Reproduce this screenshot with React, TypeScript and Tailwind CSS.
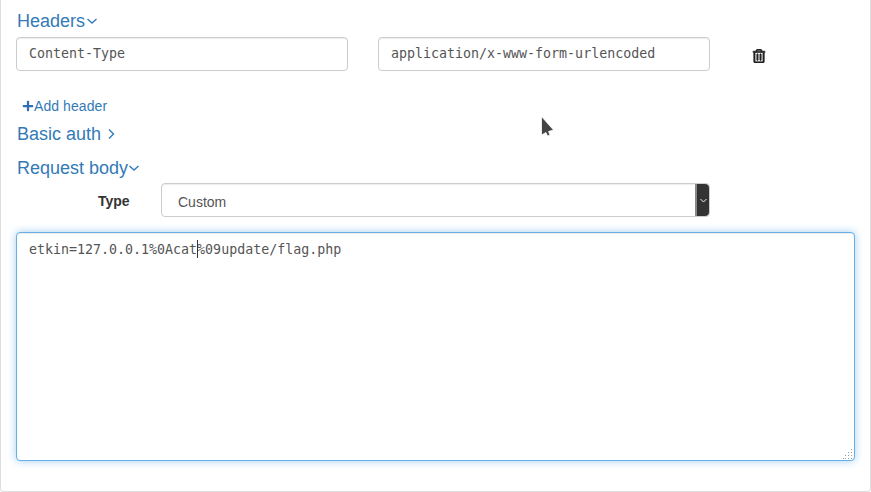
import { FaPlus, FaRegTrashAlt } from "react-icons/fa";

const sans = "font-['Liberation_Sans',Arial,sans-serif]";
const mono = "font-['DejaVu_Sans_Mono',monospace]";

function Chevron({ right = false }: { right?: boolean }) {
  return (
    <svg width="10" height="10" viewBox="0 0 10 10" fill="none" stroke="#337ab7" strokeWidth="1.4" className="shrink-0">
      {right ? <path d="M3 0.5 L7.5 5 L3 9.5" /> : <path d="M0.5 3 L5 7 L9.5 3" />}
    </svg>
  );
}

function HeaderInput({ value }: { value: string }) {
  return (
    <input
      readOnly
      value={value}
      className={`${mono} h-[34px] w-[332px] rounded border border-[#ccc] bg-white px-3 pb-[2px] text-[13.31px] text-[#555] shadow-[inset_0_1px_1px_rgba(0,0,0,0.075)] outline-none`}
    />
  );
}

export default function App() {
  return (
    <div className={`${sans} h-[492px] w-[871px] overflow-hidden bg-white`}>
      <div className="relative flex h-[492px] flex-col rounded-b border border-t-0 border-[#ddd] pl-[15px] pr-[15px]">
        <div className="mt-[11px] flex h-[20px] items-center gap-[2px] pl-[1px] text-[18px] leading-[20px] text-[#337ab7]">
          Headers
          <Chevron />
        </div>

        <div className="mt-[6px] flex items-center">
          <HeaderInput value="Content-Type" />
          <div className="ml-[30px]">
            <HeaderInput value="application/x-www-form-urlencoded" />
          </div>
          <FaRegTrashAlt size={14} stroke="currentColor" strokeWidth={24} className="ml-[42px] mt-[4px] text-[#222]" />
        </div>

        <div className="mt-[26px] flex h-[18px] items-center pl-[6px] text-[14px] leading-[18px] tracking-[0.08px] text-[#337ab7]">
          <FaPlus size={12} className="text-[#2f6fb0]" />
          Add header
        </div>

        <div className="mt-[9px] flex h-[20px] items-center gap-[5px] pl-[1px] text-[18px] leading-[20px] text-[#337ab7]">
          Basic auth
          <Chevron right />
        </div>

        <div className="mt-[14px] flex h-[20px] items-center gap-[1px] pl-[1px] text-[18px] leading-[20px] text-[#337ab7]">
          Request body
          <Chevron />
        </div>

        <div className="mt-[5px] flex items-center">
          <div className="w-[145px] pt-[2px] pl-[82px] text-[14px] font-bold text-[#333]">Type</div>
          <div className="flex h-[34px] w-[549px] items-center justify-between rounded border border-[#ccc] bg-white pl-4 text-[14px] text-[#555] shadow-[inset_0_1px_1px_rgba(0,0,0,0.075)]">
            <span className="mt-[5px]">Custom</span>
            <div className="flex h-[32px] w-[14px] items-center justify-center rounded-r-sm border-l-2 border-[#888] bg-[#333]">
              <svg width="7" height="5" viewBox="0 0 7 5" fill="none" stroke="#eee" strokeWidth="1">
                <path d="M0.5 1 L3.5 4 L6.5 1" />
              </svg>
            </div>
          </div>
        </div>

        <div className="relative mt-[15px] h-[229px] w-[839px]">
          <textarea
            readOnly
            value="etkin=127.0.0.1%0Acat%09update/flag.php"
            className={`${mono} block h-[229px] w-[839px] resize-none rounded border border-[#66afe9] bg-white px-3 py-[7px] text-[13.31px] leading-[20px] text-[#555] shadow-[inset_0_1px_1px_rgba(0,0,0,0.075),0_0_8px_rgba(102,175,233,0.6)] outline-none`}
          />
          <div className="absolute left-[181px] top-[8px] h-[18px] w-px bg-[#333]" />
          <svg width="11" height="11" viewBox="0 0 11 11" fill="#999" className="absolute bottom-[1px] right-[1px]">
            <rect x="8" y="0" width="1" height="1" />
            <rect x="5" y="3" width="1" height="1" />
            <rect x="8" y="3" width="1" height="1" />
            <rect x="2" y="6" width="1" height="1" />
            <rect x="5" y="6" width="1" height="1" />
            <rect x="8" y="6" width="1" height="1" />
            <rect x="0" y="9" width="1" height="1" />
            <rect x="2" y="9" width="1" height="1" />
            <rect x="5" y="9" width="1" height="1" />
            <rect x="8" y="9" width="1" height="1" />
          </svg>
        </div>

        <svg width="16" height="24" viewBox="0 0 16 24" className="absolute left-[537px] top-[113px]">
          <path d="M3.5 3.5 V22 L8 19.5 L9.5 23 L12 22 L10.5 18.5 L15.5 17 Z" fill="#444" stroke="#fff" strokeWidth="0.8" />
        </svg>
      </div>
    </div>
  );
}
